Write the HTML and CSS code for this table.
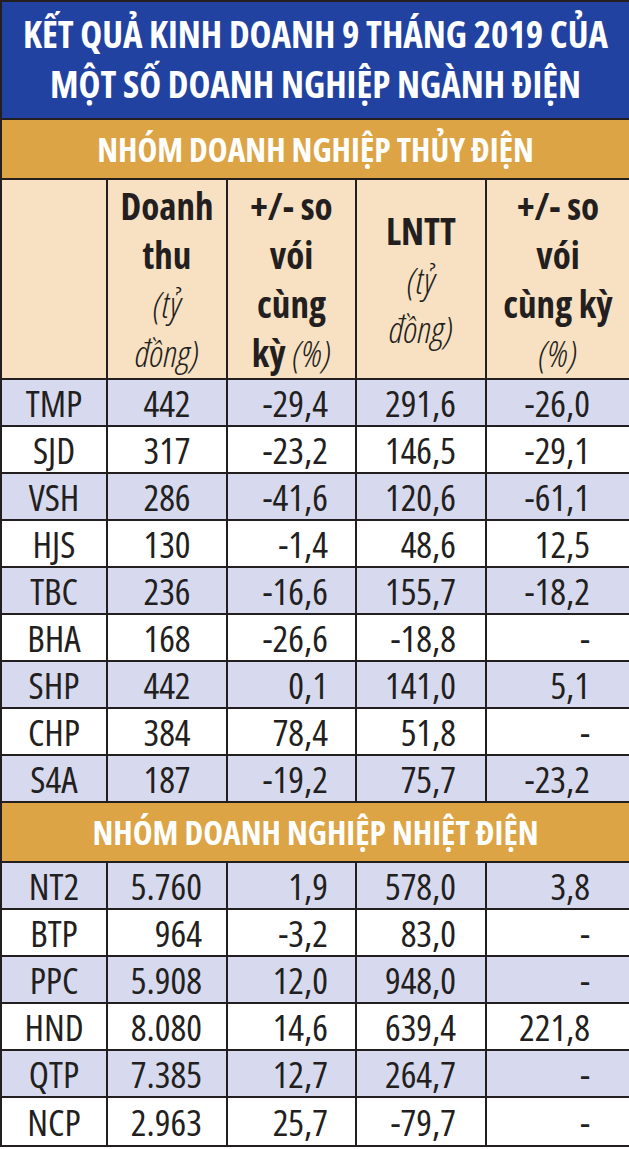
FILE: index.html
```html
<!DOCTYPE html>
<html lang="vi">
<head>
<meta charset="utf-8">
<title>Kết quả kinh doanh 9 tháng 2019</title>
<link rel="stylesheet" href="styles.css">
</head>
<body>
<div class="sheet">
  <div class="title">
    <div>KẾT QUẢ KINH DOANH 9 THÁNG 2019 CỦA</div>
    <div>MỘT SỐ DOANH NGHIỆP NGÀNH ĐIỆN</div>
  </div>
  <table class="grid">
    <colgroup>
      <col class="c0"><col class="c1"><col class="c2"><col class="c3"><col class="c4">
    </colgroup>
    <tbody>
      <tr class="section"><td colspan="5">NHÓM DOANH NGHIỆP THỦY ĐIỆN</td></tr>
      <tr class="head">
        <td></td>
        <td><b>Doanh</b><br><b>thu</b><br><i>(tỷ</i><br><i>đồng)</i></td>
        <td><b>+/- so</b><br><b>vói</b><br><b>cùng</b><br><b>kỳ</b> <i>(%)</i></td>
        <td><b>LNTT</b><br><i>(tỷ</i><br><i>đồng)</i></td>
        <td><b>+/- so</b><br><b>vói</b><br><b>cùng kỳ</b><br><i>(%)</i></td>
      </tr>
      <tr class="alt"><td>TMP</td><td class="ctr">442</td><td>-29,4</td><td>291,6</td><td>-26,0</td></tr>
      <tr><td>SJD</td><td class="ctr">317</td><td>-23,2</td><td>146,5</td><td>-29,1</td></tr>
      <tr class="alt"><td>VSH</td><td class="ctr">286</td><td>-41,6</td><td>120,6</td><td>-61,1</td></tr>
      <tr><td>HJS</td><td class="ctr">130</td><td>-1,4</td><td>48,6</td><td>12,5</td></tr>
      <tr class="alt"><td>TBC</td><td class="ctr">236</td><td>-16,6</td><td>155,7</td><td>-18,2</td></tr>
      <tr><td>BHA</td><td class="ctr">168</td><td>-26,6</td><td>-18,8</td><td>-</td></tr>
      <tr class="alt"><td>SHP</td><td class="ctr">442</td><td>0,1</td><td>141,0</td><td>5,1</td></tr>
      <tr><td>CHP</td><td class="ctr">384</td><td>78,4</td><td>51,8</td><td>-</td></tr>
      <tr class="alt"><td>S4A</td><td class="ctr">187</td><td>-19,2</td><td>75,7</td><td>-23,2</td></tr>
      <tr class="section"><td colspan="5">NHÓM DOANH NGHIỆP NHIỆT ĐIỆN</td></tr>
      <tr class="alt"><td>NT2</td><td>5.760</td><td>1,9</td><td>578,0</td><td>3,8</td></tr>
      <tr><td>BTP</td><td>964</td><td>-3,2</td><td>83,0</td><td>-</td></tr>
      <tr class="alt"><td>PPC</td><td>5.908</td><td>12,0</td><td>948,0</td><td>-</td></tr>
      <tr><td>HND</td><td>8.080</td><td>14,6</td><td>639,4</td><td>221,8</td></tr>
      <tr class="alt"><td>QTP</td><td>7.385</td><td>12,7</td><td>264,7</td><td>-</td></tr>
      <tr><td>NCP</td><td>2.963</td><td>25,7</td><td>-79,7</td><td>-</td></tr>
    </tbody>
  </table>
</div>
</body>
</html>
```
FILE: styles.css
```css
html, body {
  margin: 0;
  padding: 0;
  background: #ffffff;
}

body {
  font-family: "Open Sans", "DejaVu Sans Condensed", sans-serif;
  font-stretch: 75%;
  color: #231f20;
}

.sheet {
  width: 629px;
  box-sizing: border-box;
  border-top: 2px solid #231f20;
  border-left: 2px solid #231f20;
  border-bottom: 2px solid #231f20;
}

.title {
  background: #2142a0;
  color: #ffffff;
  font-weight: bold;
  font-size: 37px;
  line-height: 50px;
  box-sizing: border-box;
  padding-top: 7px;
  text-align: center;
  white-space: nowrap;
  border-bottom: 2px solid #231f20;
  height: 118px;
}

.grid {
  width: 627px;
  table-layout: fixed;
  border-collapse: separate;
  border-spacing: 0;
}

.c0 { width: 106px; }
.c1 { width: 120px; }
.c2 { width: 129px; }
.c3 { width: 130px; }
.c4 { width: 142px; }

.grid td {
  box-sizing: border-box;
  padding: 0;
  font-size: 37px;
  line-height: 45px;
  height: 47px;
  border-bottom: 2px solid #231f20;
  border-right: 2px solid #231f20;
  text-align: right;
  vertical-align: middle;
  white-space: nowrap;
}

.grid td:last-child {
  border-right: none;
}

.grid td:nth-child(1) { text-align: center; }
.grid td:nth-child(2) { padding-right: 24px; }
.grid td:nth-child(3) { padding-right: 27px; }
.grid td:nth-child(4) { padding-right: 29px; }
.grid td:nth-child(5) { padding-right: 39px; }
.grid td.ctr { text-align: center; padding-right: 0; }

.grid tr.alt td { background: #d7d9ee; }

.grid tr.section td {
  background: #dca445;
  color: #ffffff;
  font-weight: bold;
  font-size: 33.5px;
  line-height: 56px;
  height: 60px;
  text-align: center;
  padding: 0;
  border-right: none;
}

.grid tr.head td {
  background: #f8e1c3;
  height: 200px;
  line-height: 49px;
  text-align: center;
  padding: 0;
}

.grid tr.head b {
  font-weight: bold;
}

.grid tr.head i {
  font-style: italic;
  font-weight: 300;
}

.grid tr:last-child td {
  border-bottom: none;
}
```
